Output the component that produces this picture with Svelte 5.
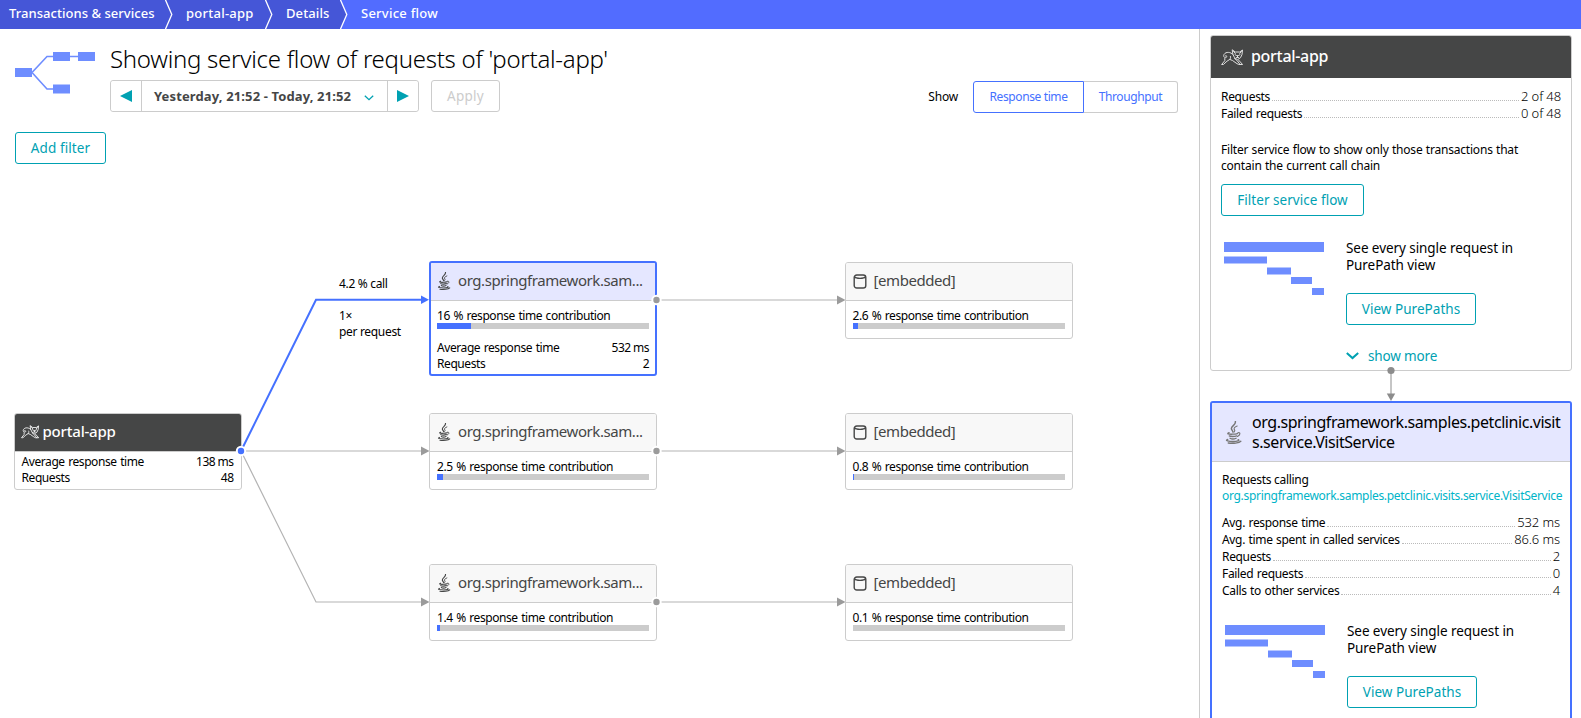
<script>
  const crumbs = ['Transactions & services', 'portal-app', 'Details', 'Service flow'];

  const service = 'org.springframework.sam...';
  const nodes = [
    { x: 13.5, y: 241, kind: 'root', icon: 'cat', title: 'portal-app', rows: [['Average response time', '138 ms'], ['Requests', '48']] },
    { x: 429, y: 90, kind: 'selected', icon: 'java', title: service, share: '16', fill: 16, rows: [['Average response time', '532 ms'], ['Requests', '2']] },
    { x: 429, y: 241, kind: '', icon: 'java', title: service, share: '2.5', fill: 2.8, rows: [] },
    { x: 429, y: 392, kind: '', icon: 'java', title: service, share: '1.4', fill: 1.5, rows: [] },
    { x: 844.5, y: 90, kind: '', icon: 'db', title: '[embedded]', share: '2.6', fill: 2.8, rows: [] },
    { x: 844.5, y: 241, kind: '', icon: 'db', title: '[embedded]', share: '0.8', fill: 0.9, rows: [] },
    { x: 844.5, y: 392, kind: '', icon: 'db', title: '[embedded]', share: '0.1', fill: 0, rows: [] }
  ];

  const totals = [['Requests', '2 of 48'], ['Failed requests', '0 of 48']];
  const details = [
    ['Avg. response time', '532 ms'],
    ['Avg. time spent in called services', '86.6 ms'],
    ['Requests', '2'],
    ['Failed requests', '0'],
    ['Calls to other services', '4']
  ];
</script>

{#snippet icon(name)}
  {#if name === 'cat'}
    <svg class="cat" viewBox="0 0 22 17" fill="none" stroke="currentColor" stroke-width="1" stroke-linejoin="round" stroke-linecap="round">
      <path d="M11.500 1l2.800 2h4.400l2.800-2-.5 4.500-1.500 3.200-3 2-3-2-1.500-3.200z" />
      <path d="M12.300 2l2 2.500M20.700 2l-2 2.500M14 5.700l1.500.8M19 5.700l-1.500.8M16.500 6.500v1.800M15.500 8.500h2" />
      <path d="M12 5.500C9.500 2.800 5 2.600 3.200 5.200 1.800 7.500 3.500 9 5 8.500s1-2.200-.5-1.700" />
      <path d="M3.800 9.500v2.200L.6 15.500h1.800L6 12.200l2.800-1.800 2.700 1.100 3.500 2.500 2.500 1.500h2" />
      <path d="M13.500 9.500l3 2.500 2.500 3.500h2.600L17.500 11" />
      <path d="M8.800 10.400c.9-1 1-2 .6-3" />
    </svg>
  {:else if name === 'java'}
    <svg class="java" viewBox="0 0 16 22" fill="none" stroke="currentColor" stroke-linecap="round">
      <path d="M9.800.5C10.500 3.800 5.500 4.800 6 7.500c.2 1.200 1.300 1.900 1.500 3.100" stroke-width="1.400" />
      <path d="M11.500 4.800C9 5.800 7.800 7 9 8.500c.6.800 0 1.500-.4 2" stroke-width="1.100" />
      <path d="M3.800 11.200c-2.800 1-.4 1.600 3.400 1.400 2 0 3.300-.2 4.600-.6M4 14.200c1 .8 5 .8 7 0M4.700 16.500c1.200.7 4.300.7 5.800 0" stroke-width="1.300" />
      <path d="M12.200 11.200c2.300-.4 2.900 1.800-.4 3.600" stroke-width="1.100" />
      <path d="M2.500 17.600c-3.600 1.200 1.500 2 5 2 4 0 7-.8 5-1.800M3 21c4.300.7 10.500.2 12-1.600" stroke-width="1.300" />
    </svg>
  {:else}
    <svg class="db" viewBox="0 0 14 15" fill="none" stroke="currentColor" stroke-width="1.400">
      <rect x="1.200" y="1" width="11.600" height="13" rx="2.600" />
      <path d="M1.500 3c1.500 1.700 9.500 1.700 11 0" stroke-width="1.200" />
    </svg>
  {/if}
{/snippet}

{#snippet purepath()}
  <div class="purepath">
    <svg width="100" height="54" viewBox="0 0 100 54" fill="#6e8dff">
      <path d="M0 0h100v10H0zM0 14.500h43v7H0zM43 25.500h24v7H43zM67 35h21v7H67zM88 46h12v7H88z" />
    </svg>
    <div class="purepath-text">
      <p>See every single request in<br />PurePath view</p>
      <button class="btn">View PurePaths</button>
    </div>
  </div>
{/snippet}

{#snippet stats(list)}
  <dl>
    {#each list as [label, value]}
      <div><dt>{label}</dt><i></i><dd>{value}</dd></div>
    {/each}
  </dl>
{/snippet}

<div class="page">
  <nav>
    {#each crumbs as crumb, i}
      <a class:current={i === 3} class="c{i}" href="#top">{crumb}</a>
      {#if i < 3}
        <svg class:last={i === 2} width="8" height="29" viewBox="0 0 8 29">
          <path class="after" d="M0 0h8v29H0l7-14.500z" />
          <path d="M.3-.5l6.500 15-6.500 15" fill="none" stroke="#fff" stroke-width="1.300" />
        </svg>
      {/if}
    {/each}
  </nav>

  <div class="columns">
    <main>
      <header>
        <svg class="flow-icon" width="80" height="44" viewBox="0 0 80 44">
          <path d="M17 21.500L32 5.500h46M17 21.500L32 38h8" fill="none" stroke="#6e8dff" stroke-width="1.600" />
          <path d="M0 17h17v9H0zM38 1h17v9H38zM63 1h17v9H63zM38 33.500h17v9H38z" fill="#6e8dff" />
        </svg>
        <div class="heading">
          <h1>Showing service flow of requests of 'portal-app'</h1>
          <div class="controls">
            <div class="timeframe">
              <button aria-label="Previous"><svg width="12" height="12"><path d="M12 0v12L0 6z" fill="#00a1b2" /></svg></button>
              <button class="range">
                Yesterday, 21:52 - Today, 21:52
                <svg width="10" height="6" fill="none"><path d="M.8.8L5 4.700 9.200.8" stroke="#00a1b2" stroke-width="1.300" /></svg>
              </button>
              <button aria-label="Next"><svg width="12" height="12"><path d="M0 0v12l12-6z" fill="#00a1b2" /></svg></button>
            </div>
            <button class="apply">Apply</button>
            <div class="show">
              <span>Show</span>
              <button class="on">Response time</button><button class="off">Throughput</button>
            </div>
          </div>
        </div>
      </header>
      <button class="btn add">Add filter</button>

      <div class="canvas">
        <svg class="edges" width="1199" height="546">
          <g fill="none" stroke="#b4b4b4" stroke-width="1.200">
            <path d="M241 279H422M241 279L316 430H422M657 128H838M657 279H838M657 430H838" />
          </g>
          <path d="M241 279L316 127.700H422" fill="none" stroke="#4571ff" stroke-width="2" />
          <path d="M421 123.500v8.500l8-4.200z" fill="#4571ff" />
          <g fill="#9b9b9b">
            {#each [[421, 279], [421, 430], [837, 128], [837, 279], [837, 430]] as [x, y]}
              <path d="M{x} {y - 4.5}v9l8.500-4.500z" />
            {/each}
          </g>
        </svg>
        {#each nodes as n}
          <article class="node {n.kind}" style:left="{n.x}px" style:top="{n.y}px">
            <h2>{@render icon(n.icon)}<span>{n.title}</span></h2>
            <div class="body">
              {#if n.share}
                <p>{n.share} % response time contribution</p>
                <div class="bar"><div style:width="{n.fill}%"></div></div>
              {/if}
              {#each n.rows as [label, value]}
                <div class="row"><span>{label}</span><span>{value}</span></div>
              {/each}
            </div>
          </article>
        {/each}
        <svg class="edges" width="1199" height="546">
          <g stroke="#fff" stroke-width="2" fill="#9b9b9b">
            <circle cx="241" cy="279" r="4.200" fill="#4571ff" />
            <circle cx="656.500" cy="128" r="4.200" />
            <circle cx="656.500" cy="279" r="4.200" />
            <circle cx="656.500" cy="430" r="4.200" />
          </g>
        </svg>
        <div class="edge-label"><p>4.2 % call</p><p>1×<br />per request</p></div>
      </div>
    </main>

    <aside>
      <section class="card">
        <h3>{@render icon('cat')}<span>portal-app</span></h3>
        {@render stats(totals)}
        <p class="hint">Filter service flow to show only those transactions that<br />contain the current call chain</p>
        <button class="btn filter">Filter service flow</button>
        {@render purepath()}
        <a class="more" href="#more">
          <svg width="13" height="8" fill="none"><path d="M.8.9l5.700 5.200L12.200.9" stroke="#00a1b2" stroke-width="2" /></svg>show more
        </a>
      </section>
      <svg class="link" width="12" height="35">
        <path d="M6 4v24" stroke="#8c8c8c" />
        <circle cx="6" cy="4.500" r="3.600" fill="#8c8c8c" />
        <path d="M1.800 27.500h8.400L6 35z" fill="#8c8c8c" />
      </svg>
      <section class="card active">
        <h3>{@render icon('java')}<span>org.springframework.samples.petclinic.visit<br />s.service.VisitService</span></h3>
        <p class="calling">Requests calling<br /><a href="#service">org.springframework.samples.petclinic.visits.service.VisitService</a></p>
        {@render stats(details)}
        {@render purepath()}
      </section>
    </aside>
  </div>
</div>

<style>
  :global(body) { margin: 0; }
  .page {
    height: 718px; overflow: hidden; display: flex; flex-direction: column;
    font: 12px/16px "Noto Sans", sans-serif; color: #000; background: #fff;
    letter-spacing: -.32px; white-space: nowrap;
  }
  .page * { box-sizing: border-box; }
  h1, h2, h3, p, dl, dd { margin: 0; font-weight: inherit; }
  a { text-decoration: none; }
  button { font: inherit; letter-spacing: inherit; background: #fff; margin: 0; padding: 0; }
  svg { display: block; flex: none; }

  nav { height: 29px; flex: none; display: flex; background: #526cff; }
  nav a { color: #fff; background: #4556d7; font-weight: 500; font-size: 13px; line-height: 26px; letter-spacing: 0; }
  nav a.current { background: none; letter-spacing: .25px; }
  .c0 { width: 165px; padding-left: 9px; letter-spacing: .04px; }
  .c1 { width: 92px; padding-left: 13px; letter-spacing: .25px; }
  .c2 { width: 67px; padding-left: 13px; letter-spacing: .1px; }
  .c3 { padding-left: 13px; }
  nav svg { background: #4556d7; }
  nav .after { fill: #4556d7; }
  nav .last .after { fill: #526cff; }

  .columns { flex: 1; display: flex; min-height: 0; }
  main { width: 1199px; flex: none; }
  header { display: flex; padding: 21px 21px 0 15px; height: 103px; }
  .flow-icon { width: 80px; margin: 1px 15px 0 0; }
  .heading { flex: 1; }
  h1 { font-size: 24px; line-height: 30px; height: 31px; margin-top: -6px; font-weight: 300; letter-spacing: -.27px; }
  .controls { display: flex; margin-top: 5px; }
  .timeframe { display: flex; height: 32px; border: 1px solid #ccc; border-radius: 3px; }
  .timeframe button { border: 0; width: 30px; display: grid; place-items: center; border-radius: 3px; }
  .timeframe .range {
    width: 247px; border: solid #ccc; border-width: 0 1px; border-radius: 0; display: flex; align-items: center;
    padding: 0 0 1px 12px; font-size: 13px; font-weight: 700; letter-spacing: .13px; color: #454646;
  }
  .range svg { margin: 4px 0 0 13px; }
  .apply { width: 69px; height: 32px; margin-left: 12px; border: 1px solid #ccc; border-radius: 3px; color: #ccc; font-size: 13.5px; letter-spacing: .25px; }
  .show { margin: 1px 0 0 auto; display: flex; align-items: center; height: 32px; }
  .show span { margin-right: 15px; letter-spacing: -.2px; }
  .show button { height: 32px; color: #4571ff; letter-spacing: -.38px; }
  .show .on { width: 111px; border: 1px solid #4571ff; border-radius: 3px 0 0 3px; }
  .show .off { width: 94px; border: 1px solid #ccc; border-left: 0; border-radius: 0 3px 3px 0; }
  .btn { height: 32px; border: 1px solid #00a1b2; border-radius: 3px; color: #00a1b2; font-size: 13.5px; letter-spacing: .04px; }
  .add { display: block; width: 91px; margin-left: 15px; letter-spacing: .1px; }

  .canvas { position: relative; height: 546px; margin-top: 8px; }
  .edges { position: absolute; left: 0; top: 0; }
  .node { position: absolute; width: 228px; border: 1px solid #ccc; border-radius: 3px; background: #fff; }
  .node h2 {
    height: 38px; display: flex; align-items: center; padding: 0 0 3px 7px; border-bottom: 1px solid #ccc;
    background: #f8f8f8; color: #454646; font-size: 15px; line-height: 20px; letter-spacing: -.43px; border-radius: 2px 2px 0 0;
  }
  .node h2 svg { position: relative; top: 1px; }
  .body { padding: 7px 7px 9px; }
  .body p, .row span:first-child { letter-spacing: -.42px; word-spacing: .8px; }
  .row span:last-child { letter-spacing: -.55px; }
  .bar { height: 6px; margin: -1px 0 0; background: #ccc; }
  .bar div { height: 6px; background: #4571ff; }
  .row { display: flex; justify-content: space-between; }
  .bar + .row { margin-top: 11px; }
  .node.selected { border: 2px solid #4571ff; height: 115px; margin-top: -1px; }
  .selected h2 { background: #e5e7ff; padding-left: 6px; }
  .selected .body { padding: 7px 6px; }
  .root h2 { background: #454646; color: #fff; font-weight: 500; letter-spacing: -.2px; padding-left: 6px; }
  .root .body { padding: 2px 7px 3px; }
  .java { width: 14px; height: 18px; margin-right: 7px; color: #454646; }
  .db { width: 14px; height: 15px; margin-right: 7px; }
  .cat { width: 18px; height: 14px; margin-right: 4px; }
  .edge-label { position: absolute; left: 339px; top: 104px; }
  .edge-label p + p { margin-top: 16px; }

  aside { flex: 1; border-left: 1px solid #ccc; padding: 6px 9px 0 10px; }
  .card { width: 362px; border: 1px solid #ccc; border-radius: 3px; height: 336px; padding: 0 10px; display: flex; flex-direction: column; align-items: flex-start; }
  .card h3 {
    align-self: stretch; display: flex; align-items: center; height: 42px; margin: 0 -10px; padding: 0 0 2px 10px;
    background: #454646; color: #fff; font-size: 16px; line-height: 20px; font-weight: 500; letter-spacing: -.3px; border-radius: 2px 2px 0 0;
  }
  h3 .cat { width: 22px; height: 17px; margin: 2px 8px 0 0; color: #ddd; }
  dl { align-self: stretch; margin-top: 10px; }
  dl div { display: flex; height: 17px; line-height: 17px; align-items: baseline; }
  dl i { flex: 1; border-bottom: 1px dotted #bbb; margin: 0 2px; }
  dt { letter-spacing: -.33px; word-spacing: .7px; }
  dd { font-size: 13px; font-weight: 300; letter-spacing: -.1px; }
  .hint { margin-top: 20px; letter-spacing: -.2px; word-spacing: .4px; }
  .filter { width: 143px; margin-top: 10px; }
  .purepath { display: flex; margin: 24px 0 0 3px; }
  .purepath svg { margin-top: 2px; }
  .purepath-text { margin-left: 22px; font-size: 13.5px; line-height: 17px; letter-spacing: -.07px; }
  .purepath .btn { width: 130px; margin-top: 19px; }
  .more { display: flex; align-items: center; gap: 9px; margin: 22px 0 0 125px; color: #00a1b2; font-size: 13.5px; letter-spacing: -.15px; line-height: 18px; }
  .link { position: relative; margin: -5px 0 0 175px; }
  .active { border: 2px solid #4571ff; height: 340px; }
  .active h3 { height: 59px; background: #e5e7ff; color: #000; border-bottom: 1px solid #ccc; font-weight: 400; letter-spacing: -.44px; padding: 0 0 0 13px; }
  h3 .java { width: 17px; height: 23px; margin: 0 10px 0 0; color: #777; }
  .calling { margin-top: 10px; letter-spacing: -.3px; }
  .calling a { color: #00b4c8; }
</style>
